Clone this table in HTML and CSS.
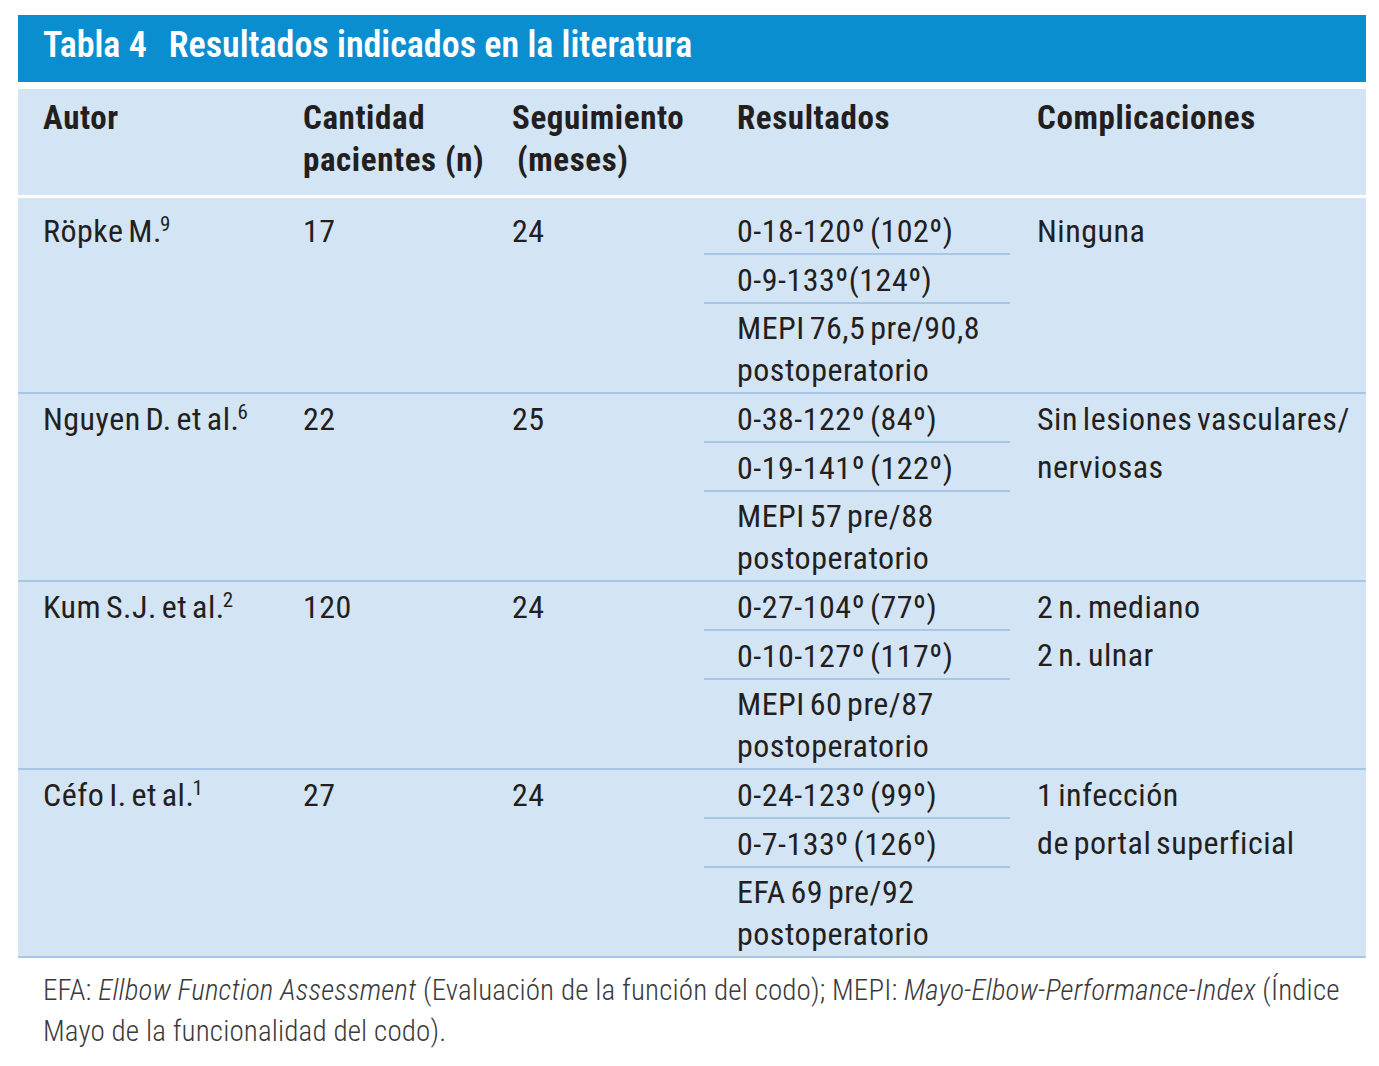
FILE: index.html
```html
<!DOCTYPE html>
<html lang="es">
<head>
<meta charset="utf-8">
<title>Tabla 4 Resultados indicados en la literatura</title>
<link rel="stylesheet" href="styles.css">
</head>
<body>
<div class="page">
  <div class="caption"><span class="cap-num">Tabla 4</span><span class="cap-title">Resultados indicados en la literatura</span></div>

  <div class="table">
    <div class="row head">
      <div class="cell">Autor</div>
      <div class="cell">Cantidad<br>pacientes (n)</div>
      <div class="cell">Seguimiento<br><span class="indent">(meses)</span></div>
      <div class="cell res-head">Resultados</div>
      <div class="cell comp">Complicaciones</div>
    </div>

    <div class="row body first">
      <div class="cell">Röpke M.<sup>9</sup></div>
      <div class="cell">17</div>
      <div class="cell">24</div>
      <div class="results">
        <div class="res">0-18-120º (102º)</div>
        <div class="res">0-9-133º(124º)</div>
        <div class="res last">MEPI 76,5 pre/90,8<br>postoperatorio</div>
      </div>
      <div class="cell comp">Ninguna</div>
    </div>

    <div class="row body">
      <div class="cell">Nguyen D. et al.<sup>6</sup></div>
      <div class="cell">22</div>
      <div class="cell">25</div>
      <div class="results">
        <div class="res">0-38-122º (84º)</div>
        <div class="res">0-19-141º (122º)</div>
        <div class="res last">MEPI 57 pre/88<br>postoperatorio</div>
      </div>
      <div class="cell comp">Sin lesiones vasculares/<br>nerviosas</div>
    </div>

    <div class="row body">
      <div class="cell">Kum S.J. et al.<sup>2</sup></div>
      <div class="cell">120</div>
      <div class="cell">24</div>
      <div class="results">
        <div class="res">0-27-104º (77º)</div>
        <div class="res">0-10-127º (117º)</div>
        <div class="res last">MEPI 60 pre/87<br>postoperatorio</div>
      </div>
      <div class="cell comp">2 n. mediano<br>2 n. ulnar</div>
    </div>

    <div class="row body">
      <div class="cell">Céfo I. et al.<sup>1</sup></div>
      <div class="cell">27</div>
      <div class="cell">24</div>
      <div class="results">
        <div class="res">0-24-123º (99º)</div>
        <div class="res">0-7-133º (126º)</div>
        <div class="res last">EFA 69 pre/92<br>postoperatorio</div>
      </div>
      <div class="cell comp">1 infección<br>de portal superficial</div>
    </div>
  </div>

  <p class="note">EFA: <em>Ellbow Function Assessment</em> (Evaluación de la función del codo); MEPI: <em>Mayo-Elbow-Performance-Index</em> (Índice<br>Mayo de la funcionalidad del codo).</p>
</div>
</body>
</html>
```
FILE: styles.css
```css
html, body {
  margin: 0;
  padding: 0;
  background: #ffffff;
}

.page {
  width: 1348px;
  padding: 15px 0 0 18px;
  font-family: "Roboto Condensed", "Open Sans", "Liberation Sans", sans-serif;
  color: #231f20;
}

.caption {
  background: #0a8ecf;
  height: 67px;
  box-sizing: border-box;
  display: flex;
  align-items: center;
  padding: 0 0 7px 25px;
  color: #ffffff;
  font-size: 36px;
  font-weight: 600;
  gap: 22px;
}

.table {
  margin-top: 7px;
  background: #d3e4f4;
}

.row {
  display: grid;
  grid-template-columns: 260px 209px 217px 306px 356px;
}

.head {
  height: 106px;
  border-bottom: 3px solid #ffffff;
  font-weight: 700;
  font-size: 33px;
  line-height: 42px;
  letter-spacing: 0.6px;
}

.head .cell {
  padding-top: 8px;
}

.cell {
  padding-left: 25px;
}

.res-head {
  padding-left: 33px;
}

.comp {
  padding-left: 27px;
}

.indent {
  padding-left: 5px;
}

.body {
  font-size: 32px;
  letter-spacing: 0.5px;
  word-spacing: -3px;
  border-bottom: 2px solid #a8c7e4;
}

.body.first {
  padding-top: 8px;
}

.body .cell {
  padding-top: 3px;
  line-height: 44px;
}

.body .comp {
  padding-top: 1px;
  line-height: 48px;
}

.results {
  display: flex;
  flex-direction: column;
}

.res {
  padding: 3px 0 0 33px;
  line-height: 44px;
  border-bottom: 2px solid #a8c7e4;
}

.res.last {
  border-bottom: none;
  line-height: 42px;
  padding-bottom: 1px;
}

sup {
  font-size: 21px;
  line-height: 0;
  vertical-align: 11px;
  margin-left: -2px;
  letter-spacing: 0;
}

.note {
  margin: 12px 0 0;
  padding-left: 25px;
  font-size: 29px;
  line-height: 41px;
  font-weight: 300;
  letter-spacing: 0.15px;
  color: #3a3a3a;
}

.note em {
  font-style: italic;
}
```
